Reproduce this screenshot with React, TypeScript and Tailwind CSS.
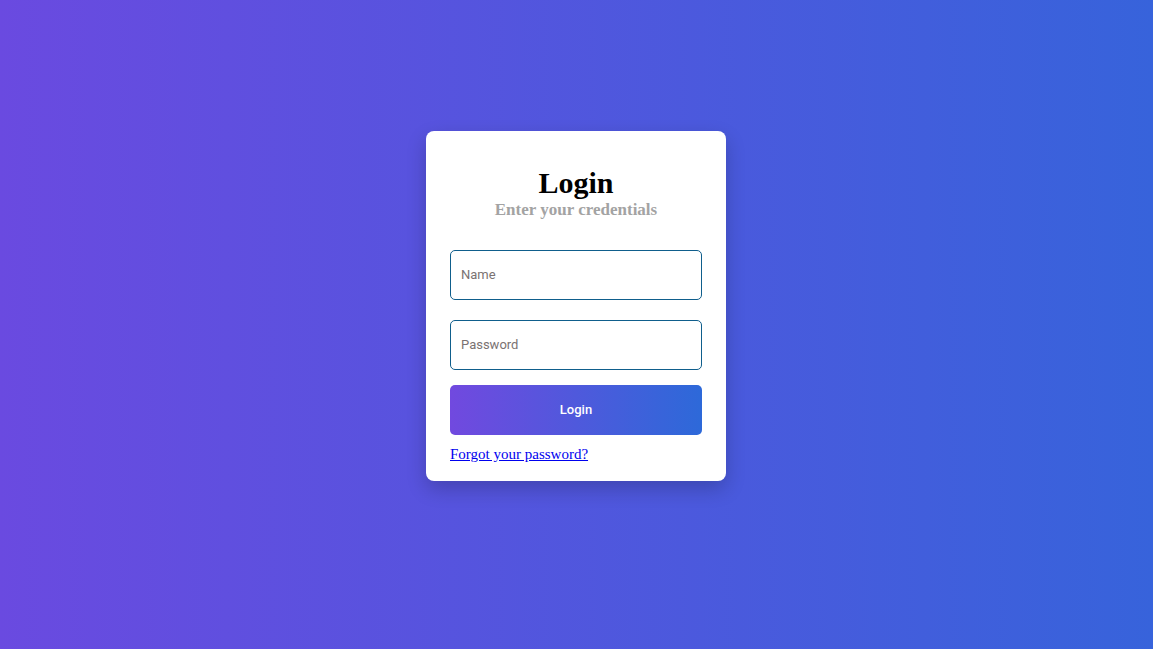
export default function App() {
  return (
    <div className="min-h-screen w-full flex items-center justify-center pb-[37px] pr-px bg-[linear-gradient(to_right,#6a4ae0,#3763db)]">
      <div className="w-[300px] bg-white rounded-lg shadow-[0_8px_20px_rgba(0,0,0,0.2)] px-6 pt-[35px] pb-[18px] flex flex-col">
        <div className="text-center font-['Liberation_Serif',serif]">
          <h1 className="text-[30px] font-bold leading-[34px] text-black">Login</h1>
          <p className="text-[17px] font-bold leading-[20px] text-[#a3a3a3]">Enter your credentials</p>
        </div>
        <input
          placeholder="Name"
          className="mt-[30px] h-[50px] w-full rounded-[5px] border border-[#0f5e8c] px-[10px] pb-px text-[13px] font-['Roboto',sans-serif] placeholder:text-[#7a7272] outline-none"
        />
        <input
          type="password"
          placeholder="Password"
          className="mt-5 h-[50px] w-full rounded-[5px] border border-[#0f5e8c] px-[10px] pb-px text-[13px] font-['Roboto',sans-serif] placeholder:text-[#7a7272] outline-none"
        />
        <button className="mt-[15px] h-[50px] w-full rounded-[5px] bg-[linear-gradient(to_right,#7149df,#2d69d9)] text-white text-[13px] font-medium font-['Roboto',sans-serif]">
          Login
        </button>
        <a href="#" className="mt-[10px] self-start text-[15px] leading-[18px] text-[#0000ee] underline font-['Liberation_Serif',serif]">
          Forgot your password?
        </a>
      </div>
    </div>
  );
}
